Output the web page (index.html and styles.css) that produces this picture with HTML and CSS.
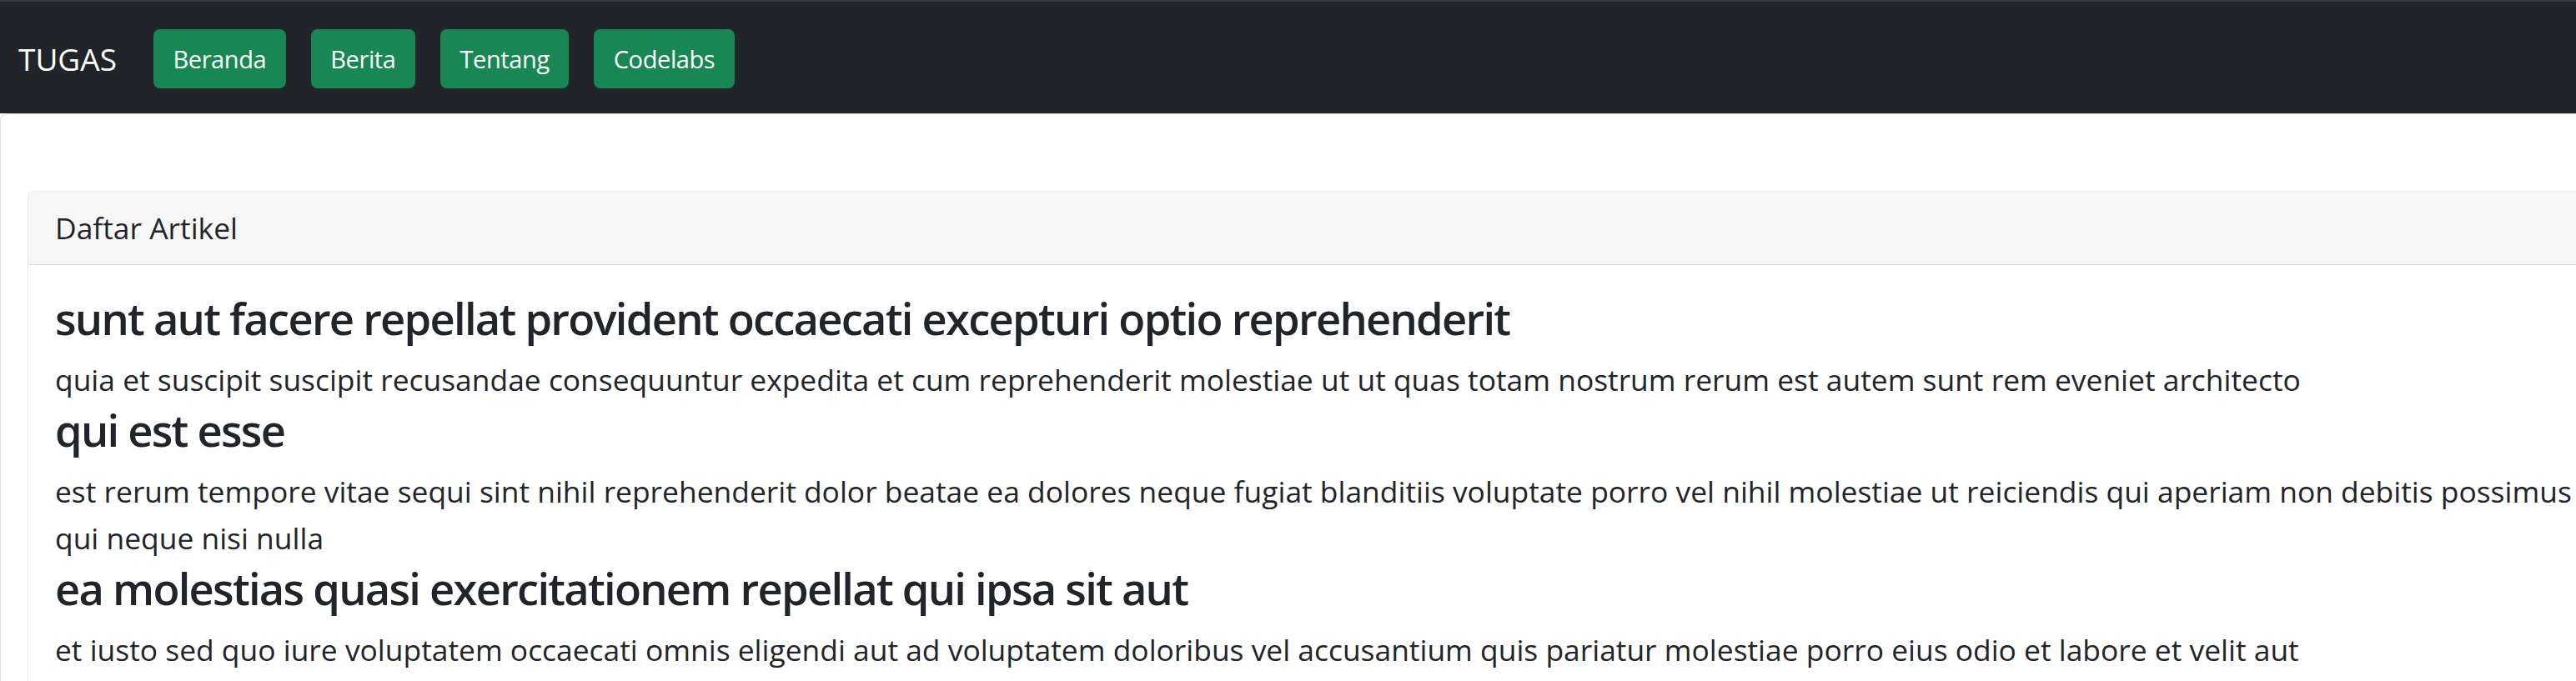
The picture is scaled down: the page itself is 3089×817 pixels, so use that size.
FILE: index.html
```html
<!DOCTYPE html>
<html lang="id">
<head>
<meta charset="utf-8">
<title>TUGAS</title>
<link rel="stylesheet" href="styles.css">
</head>
<body>
<nav class="navbar">
  <span class="brand">TUGAS</span>
  <div class="nav-links">
    <a class="btn" href="#">Beranda</a>
    <a class="btn" href="#">Berita</a>
    <a class="btn" href="#">Tentang</a>
    <a class="btn" href="#">Codelabs</a>
  </div>
</nav>
<main class="frame">
  <section class="card">
    <div class="card-header">Daftar Artikel</div>
    <div class="card-body">
      <article class="post">
        <h4 class="post-title">sunt aut facere repellat provident occaecati excepturi optio reprehenderit</h4>
        <p class="post-body">quia et suscipit suscipit recusandae consequuntur expedita et cum reprehenderit molestiae ut ut quas totam nostrum rerum est autem sunt rem eveniet architecto</p>
      </article>
      <article class="post">
        <h4 class="post-title">qui est esse</h4>
        <p class="post-body">est rerum tempore vitae sequi sint nihil reprehenderit dolor beatae ea dolores neque fugiat blanditiis voluptate porro vel nihil molestiae ut reiciendis qui aperiam non debitis possimus qui neque nisi nulla</p>
      </article>
      <article class="post">
        <h4 class="post-title">ea molestias quasi exercitationem repellat qui ipsa sit aut</h4>
        <p class="post-body">et iusto sed quo iure voluptatem occaecati omnis eligendi aut ad voluptatem doloribus vel accusantium quis pariatur molestiae porro eius odio et labore et velit aut</p>
      </article>
    </div>
  </section>
</main>
</body>
</html>
```
FILE: styles.css
```css
html, body {
  margin: 0;
  padding: 0;
  background: #ffffff;
  overflow: hidden;
}
body {
  font-family: "Open Sans", "Noto Sans", sans-serif;
  color: #212529;
  font-size: 35.4px;
  line-height: 56px;
}
.navbar {
  box-sizing: border-box;
  height: 136px;
  border-top: 2px solid #38383d;
  padding: 3px 0 0 22px;
  background: #212529;
  display: flex;
  align-items: center;
}
.brand {
  color: #ffffff;
  font-size: 37px;
  line-height: 56px;
  margin-right: 44px;
}
.nav-links {
  display: flex;
  gap: 30px;
}
.btn {
  display: block;
  box-sizing: border-box;
  height: 71px;
  padding: 0 23.5px;
  border-radius: 8px;
  background: #198754;
  color: #ffffff;
  text-decoration: none;
  font-size: 29px;
  letter-spacing: -0.4px;
  line-height: 71px;
}
.frame {
  border-top: 1px solid #dcdcdc;
  border-left: 1px solid #dcdcdc;
  border-top-left-radius: 9px;
  padding: 92px 0 0 32px;
  overflow: hidden;
}
.card {
  margin-right: -54px;
  border: 1px solid #ececec;
  border-right: none;
  border-radius: 8px 0 0 0;
}
.card-header {
  background: #f7f7f7;
  border-bottom: 1px solid #dadada;
  border-radius: 8px 0 0 0;
  padding: 15px 32px 16px;
}
.card-body {
  padding: 31px 32px 40px;
}
.post-title {
  margin: 0 0 13px;
  font-size: 52.5px;
  font-weight: 600;
  letter-spacing: -1.75px;
  line-height: 65px;
}
.post-body {
  margin: 0;
}
```
